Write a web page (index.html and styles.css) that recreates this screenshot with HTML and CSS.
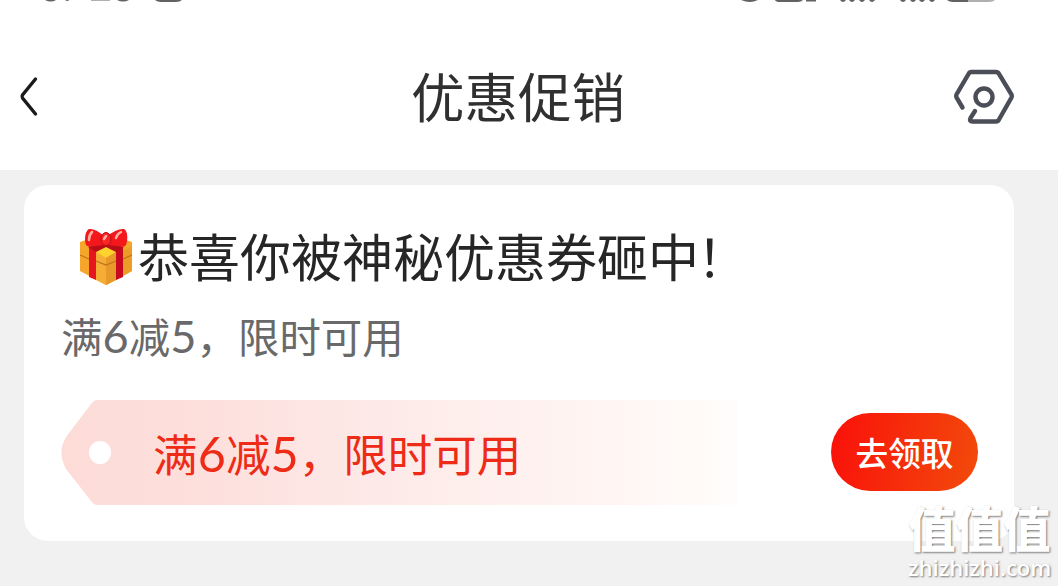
FILE: index.html
```html
<!DOCTYPE html>
<html lang="zh-CN">
<head>
    <meta charset="UTF-8">
    <meta name="viewport" content="width=device-width, initial-scale=1.0">
    <title>优惠促销</title>
    <link rel="stylesheet" href="styles.css">
</head>
<body>
    <header class="header">
        <!-- status bar, scrolled almost out of view -->
        <svg class="status" width="1058" height="4" viewBox="0 0 1058 4" fill="#626262">
            <path d="M45 0h11q-5 3-11 0zM65 0h4q-1 2-4 0z"/>
            <path d="M91 0h19v1H91z" opacity=".5"/>
            <path d="M117 0h12q-6 3.200-12 0zM155 0h27q-2 2-6 2h-15q-4 0-6-2z"/>
            <path d="M741 0h17q-8 4-17 0zM775 0h28q-2 2-5 2h-18q-4 0-5-2zM806 0h10v1.500h-10z"/>
            <path d="M840 0h6q-3 4-6 0zM849 0h6q-3 4-6 0zM859 0h6q-3 4-6 0zM869 0h6q-3 4-6 0zM900 0h6q-3 4-6 0zM910 0h6q-3 4-6 0zM919 0h6q-3 4-6 0zM929 0h6q-3 4-6 0zM947 0h21v2h-15q-4 0-6-2z"/>
            <path d="M968 0h27q-2 2-6 2h-21z" fill="#b0b0b0"/>
        </svg>
        <div class="nav">
            <svg class="back" width="20" height="42" viewBox="0 0 20 42">
                <path d="M16.500 3L3.500 19Q2.500 20.500 3.500 22L16.500 38"/>
            </svg>
            <h1 class="title">优惠促销</h1>
            <svg class="settings" width="62" height="58" viewBox="0 0 62 58">
                <path d="M9.500 39.500L3.500 29.500Q2.800 28 3.500 26.500L15.500 6Q16.500 4 18.500 4H43Q45 4 46 6L58.500 26.500Q59.200 28 58.500 29.500L46 51.500Q45 53.500 43 53.500H19.500Q16 53.500 17.500 50L22 43"/>
                <circle cx="31" cy="29" r="8.500"/>
            </svg>
        </div>
    </header>

    <main class="content">
        <section class="card">
            <h2 class="card-title">
                <svg class="gift" width="56" height="60" viewBox="0 0 56 60">
                    <path fill="#f6a72b" d="M2 14L28 5L54 14V43L28 57L2 43Z"/>
                    <path fill="#eb9d25" d="M28 31L54 18V43L28 57Z"/>
                    <path fill="#ffd22e" d="M17 24L28 19L39 24L28 30Z"/>
                    <path fill="#f5ad35" d="M18 24L28 30L38 24V52L28 57L18 52Z"/>
                    <path fill="#e8992a" d="M28 30L38 24V52L28 57Z"/>
                    <path fill="#e6151e" d="M11 19L18 23V52L11 49Z"/>
                    <path fill="#c9091f" d="M38 23L45 19V49L38 52Z"/>
                    <path fill="none" stroke="#bd721a" stroke-width="1.200" d="M2 27L11 31M18 33L28 37L38 33M45 31L54 27"/>
                    <path fill="#b90d17" d="M10 19L28 12L46 19L38 24L28 19L18 24Z"/>
                    <path fill="#f4171b" d="M26 8Q17 0 11 1C7 3 6 12 8 17Q10 20 17 18L27 17Z"/>
                    <path fill="#f4171b" d="M29 8Q40 0 46 1C50 3 50 12 48 17Q46 20 39 18L29 17Z"/>
                    <ellipse fill="#fb2525" stroke="#b70f19" stroke-width="1" cx="28" cy="11" rx="5" ry="6.500"/>
                    <path fill="none" stroke="#ffb1a6" stroke-width="2.500" stroke-linecap="round" d="M14 4Q11 7 11 12M43 4Q39 6 38 10M28 8L26 11"/>
                </svg>
                <span class="card-title-text">恭喜你被神秘优惠券砸中<span class="mark">！</span></span>
            </h2>
            <p class="desc">满<span class="num">6</span>减<span class="num">5</span>，限时可用</p>
            <div class="coupon">
                <div class="ticket">
                    <svg class="tag" width="676" height="105" viewBox="0 0 676 105">
                        <defs>
                            <linearGradient id="tag-fill">
                                <stop offset="0" stop-color="#fddcd8"/>
                                <stop offset=".2" stop-color="#fddfdc"/>
                                <stop offset=".5" stop-color="#fdebe9"/>
                                <stop offset=".8" stop-color="#fff5f2"/>
                                <stop offset="1" stop-color="#fffdfc"/>
                            </linearGradient>
                        </defs>
                        <path fill="url(#tag-fill)" fill-rule="evenodd" d="M36 0H676V105H36Q33 105 30 101L5 69Q-4 52.500 5 37L30 4Q33 0 36 0ZM39 41a11 11.500 0 1 0 0 23a11 11.500 0 1 0 0-23Z"/>
                    </svg>
                    <p class="ticket-text">满<span class="num">6</span>减<span class="num">5</span>，限时可用</p>
                </div>
                <button class="btn">去领取</button>
            </div>
        </section>
    </main>

    <div class="watermark">
        <span class="mark-cn">值值值</span>
        <span class="mark-en">zhizhizhi.com</span>
    </div>
</body>
</html>
```
FILE: styles.css
```css
* {
    box-sizing: border-box;
}

body {
    margin: 0;
    height: 586px;
    overflow: hidden;
    background-color: #f1f1f1;
    font-family: "Noto Sans CJK SC", sans-serif;
    color: #262626;
}

h1, h2, p {
    margin: 0;
    font-weight: 400;
    white-space: nowrap;
}

svg {
    display: block;
    flex-shrink: 0;
}

.header {
    height: 170px;
    background-color: #fff;
}

.nav {
    display: flex;
    align-items: center;
    justify-content: space-between;
    height: 146px;
    margin-top: 20px;
    padding: 0 43px 0 19px;
}

.back path {
    fill: none;
    stroke: #1a1a1a;
    stroke-width: 3.4;
    stroke-linecap: round;
}

.title {
    margin-left: 44px;
    padding-bottom: 4px;
    font-size: 53.5px;
    line-height: 70px;
    color: #303030;
}

.settings {
    fill: none;
    stroke: #4b4e57;
    stroke-width: 4.4;
    stroke-linecap: round;
}

.content {
    padding: 15px 44px 0 24px;
}

.card {
    height: 356px;
    padding: 37px 36px 36px 37px;
    border-radius: 24px;
    background-color: #fff;
}

.card-title {
    display: flex;
    align-items: center;
    gap: 4px;
    height: 72px;
    padding-left: 17px;
    font-size: 51px;
}

.card-title-text {
    padding-bottom: 6px;
    line-height: 66px;
}

.mark {
    margin-left: -2px;
}

.desc {
    height: 60px;
    margin-top: 11px;
    font-size: 41.4px;
    line-height: 60px;
    color: #696969;
}

.num {
    display: inline-block;
    width: 0.585em;
    font-family: Lato, sans-serif;
    font-size: 1.09em;
    line-height: 1;
    text-align: center;
}

.coupon {
    display: flex;
    align-items: center;
    justify-content: space-between;
    height: 105px;
    margin-top: 35px;
}

.ticket {
    display: grid;
    align-items: center;
}

.tag, .ticket-text {
    grid-area: 1 / 1;
}

.ticket-text {
    padding: 0 0 0 92px;
    font-size: 44.5px;
    line-height: 60px;
    color: #ee2b16;
}

.btn {
    width: 147px;
    height: 78px;
    margin-bottom: 2px;
    padding: 0;
    border: none;
    border-radius: 39px;
    background: linear-gradient(100deg, #fa100a, #f24b0b);
    color: #fff;
    font-family: inherit;
    font-size: 32.7px;
    font-weight: 500;
}

/* sits over the corner of the card */
.watermark {
    position: absolute;
    right: 8px;
    bottom: 0;
    display: flex;
    flex-direction: column;
    width: 142px;
    height: 86px;
    color: #fff;
    font-weight: 900;
    white-space: nowrap;
    text-shadow: 1px 1px 2px #777;
}

.mark-cn {
    font-size: 47.5px;
    line-height: 54px;
}

.mark-en {
    font-family: "Open Sans", sans-serif;
    font-size: 22px;
    font-weight: 600;
    line-height: 27px;
}
```
